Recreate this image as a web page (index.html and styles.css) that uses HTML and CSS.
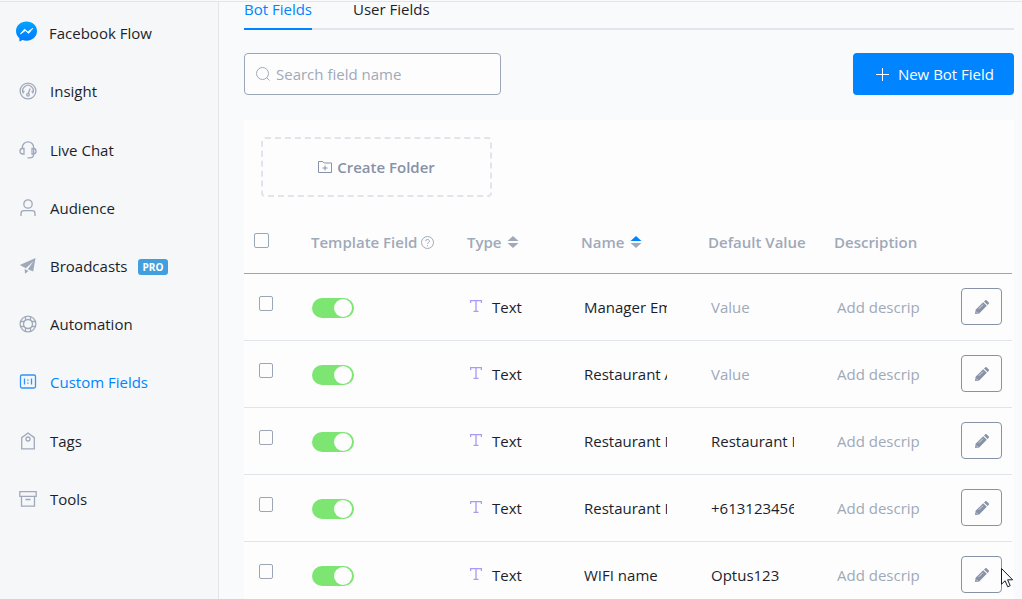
FILE: index.html
```html
<!DOCTYPE html>
<html lang="en">
<head>
<meta charset="utf-8">
<title>Custom Fields</title>
<link rel="stylesheet" href="styles.css">
</head>
<body>
<div class="app">
  <nav class="sidebar" aria-label="Main">
    <a class="nav-item brand" href="#">
      <svg class="brand-icon" viewBox="0 0 21 21"><defs><linearGradient id="msg" x1="0" y1="0" x2="0" y2="1"><stop offset="0" stop-color="#00a5ff"/><stop offset="1" stop-color="#0078ff"/></linearGradient></defs><path d="M10.500 .5C4.800 .5 0 4.600 0 10c0 3 1.300 5.400 3.400 7.200V20.600l3.200-1.500c1.200.4 2.500.6 3.900.6 5.800 0 10.500-4.100 10.500-9.700S16.300.5 10.500.5z" fill="url(#msg)"/><path d="M4.500 12.900 8.500 8.200l3.200 2.700 5-3.500-4 4.900-3.400-2.800z" fill="#fff" stroke="#fff" stroke-width=".9" stroke-linejoin="round"/></svg>
      <span>Facebook Flow</span></a>
    <a class="nav-item" href="#">
      <svg class="icon" viewBox="0 0 18 18"><circle cx="9" cy="9" r="7.900"/><path d="M4.500 11.500A5.300 5.300 0 1 1 13.500 11.500M4.300 9.500h1.200M12.500 9.500h1.200M9.300 11.500l1.800-5"/><circle cx="9" cy="12.700" r="1.300"/></svg>
      <span>Insight</span></a>
    <a class="nav-item" href="#">
      <svg class="icon" viewBox="0 0 18 18"><path d="M3.300 7V6.500a5.700 5.700 0 0 1 11.400 0V13c0 2.500-1.700 3.900-4.200 3.900H8.500M5 7.500v5.500H3.700A2.700 2.700 0 0 1 3.700 7.500zM13 7.500v5.500h1.300a2.700 2.700 0 0 0 0-5.500z"/></svg>
      <span>Live Chat</span></a>
    <a class="nav-item" href="#">
      <svg class="icon" viewBox="0 0 18 18"><circle cx="9" cy="5" r="4.200"/><path d="M2 17v-2.500a2.800 2.800 0 0 1 2.800-2.800h8.400a2.800 2.800 0 0 1 2.800 2.800V17"/></svg>
      <span>Audience</span></a>
    <a class="nav-item" href="#">
      <svg class="icon solid" viewBox="0 0 18 18"><path d="M16.500 1 14.200 14.500 8.800 12.200 14.500 4.300 6.800 11.300.8 8zM5.700 12l3.800 2-3.500 2.800z"/></svg>
      <span>Broadcasts</span><span class="badge">PRO</span></a>
    <a class="nav-item" href="#">
      <svg class="icon" viewBox="0 0 18 18"><circle cx="9" cy="9" r="7.900"/><circle cx="9" cy="9" r="4.500"/><path d="M6.500 1.700v4.200M11.500 1.700v4.200M6.500 12.100v4.200M11.500 12.100v4.200M1.700 6.500h4.200M1.700 11.500h4.200M12.100 6.500h4.200M12.100 11.500h4.200"/></svg>
      <span>Automation</span></a>
    <a class="nav-item active" href="#" aria-current="page">
      <svg class="icon" viewBox="0 0 18 18"><rect x="1.500" y="2" width="15" height="13" rx="1.500"/><path d="M5.500 5.500v6M12.500 5.500v6M8.900 6.500v1.300M8.900 9.500v1.300"/></svg>
      <span>Custom Fields</span></a>
    <a class="nav-item" href="#">
      <svg class="icon" viewBox="0 0 18 18"><path d="M9 1l6.300 4.700v11.200H2.700V5.700z"/><circle cx="9" cy="7" r="2"/></svg>
      <span>Tags</span></a>
    <a class="nav-item" href="#">
      <svg class="icon" viewBox="0 0 18 18"><path d="M.8 1.700h16.400v4.600H.8zM2.500 6.300h13v9.800h-13zM6.500 9.500h5"/></svg>
      <span>Tools</span></a>
  </nav>

  <main class="main">
    <div class="tabs">
      <a class="tab selected" href="#">Bot Fields</a>
      <a class="tab" href="#">User Fields</a>
    </div>
    <div class="toolbar">
      <label class="search">
        <svg class="search-icon" viewBox="0 0 14 14"><circle cx="6.500" cy="6.500" r="6"/><path d="m10.500 10.500 3 3"/></svg>
        <input type="text" placeholder="Search field name" aria-label="Search field name">
      </label>
      <button class="primary" type="button"><svg class="plus" viewBox="0 0 13 13"><path d="M6.500 0v13M0 6.500h13"/></svg>New Bot Field</button>
    </div>

    <section class="card">
      <button class="folder" type="button"><svg class="folder-icon" viewBox="0 0 14 12"><path d="M.5 11.500V.5h4.300l1.400 1.500h7.300v9.500zM7 4.500v5M4.500 7h5"/></svg>Create Folder</button>
      <table class="fields">
        <colgroup><col class="c-check"><col class="c-template"><col class="c-type"><col class="c-name"><col class="c-value"><col class="c-desc"><col></colgroup>
        <thead>
          <tr>
            <th><input class="check all" type="checkbox" aria-label="Select all"></th>
            <th><span class="head">Template Field<svg class="help" viewBox="0 0 13 13"><circle cx="6.500" cy="6.500" r="6"/><path d="M4.700 5.200a1.800 1.800 0 1 1 2.600 1.600c-.6.300-.8.600-.8 1.200M6.500 9.200v1"/></svg></span></th>
            <th><span class="head">Type<svg class="sort" viewBox="0 0 12 12"><path d="M6 0l5.500 5H.5z"/><path d="M6 12 .5 7h11z"/></svg></span></th>
            <th><span class="head">Name<svg class="sort asc" viewBox="0 0 12 12"><path d="M6 0l5.500 5H.5z"/><path d="M6 12 .5 7h11z"/></svg></span></th>
            <th>Default Value</th>
            <th>Description</th>
            <th></th>
          </tr>
        </thead>
        <tbody id="rows"></tbody>
      </table>
    </section>
  </main>
  <svg class="pointer" viewBox="0 0 12 20"><path d="M.5.5v15.700l3.600-3.400 2.600 6 2.500-1.100-2.600-5.900h5z"/></svg>
</div>
<script src="fields.js"></script>
</body>
</html>
```
FILE: fields.js
```js
const fields = [
  { name: "Manager Email", value: "" },
  { name: "Restaurant Address", value: "" },
  { name: "Restaurant Name", value: "Restaurant Name" },
  { name: "Restaurant Phone", value: "+61312345678" },
  { name: "WIFI name", value: "Optus123" }
];

document.getElementById("rows").innerHTML = fields.map(({ name, value }) => `
  <tr>
    <td class="top"><input class="check" type="checkbox" aria-label="Select ${name}"></td>
    <td><input class="toggle" type="checkbox" role="switch" checked aria-label="Template field"></td>
    <td><span class="type"><svg class="type-icon" viewBox="0 0 12 12"><path d="M.6 3V.6h10.800V3M6 .6v10.800M3.500 11.400h5"/></svg>Text</span></td>
    <td><input class="cell" type="text" value="${name}" aria-label="Name"></td>
    <td><input class="cell" type="text" value="${value}" placeholder="Value" aria-label="Default value"></td>
    <td><input class="cell" type="text" placeholder="Add description" aria-label="Description"></td>
    <td><button class="edit" type="button" aria-label="Edit"><svg class="pencil" viewBox="0 0 14 14"><path d="M0 14l.6-4.200L8.200 2.200l3.600 3.600L4.200 13.400zM9 1.400 10.100.4a1.200 1.200 0 0 1 1.700 0l1.800 1.800a1.200 1.200 0 0 1 0 1.700L12.600 5z"/><path class="shine" d="M3.800 8.800 8 4.600M1.200 11.600l1.200 1.200"/></svg></button></td>
  </tr>`).join("");
```
FILE: styles.css
```css
* { box-sizing: border-box; }

body {
  margin: 0;
  font: 15px/20px "Open Sans", sans-serif;
  color: #1c1f2b;
  background: #f9fafc;
}

input, button { font: inherit; color: inherit; }
a { color: inherit; text-decoration: none; }
svg { flex: none; fill: none; }

.app {
  position: relative;
  display: flex;
  height: 100vh;
  overflow: hidden;
  padding-top: 1px;
}
.app::before {
  content: "";
  position: absolute;
  top: 1px;
  left: 0;
  right: 0;
  height: 1px;
  background: #e1e4e9;
}

.sidebar {
  flex: none;
  display: grid;
  grid-auto-rows: 1fr;
  align-self: stretch;
  align-content: start;
  width: 219px;
  padding: 3px 16px 71px 20px;
  border-right: 1px solid #e1e4e9;
  background: #f5f7f9;
}
.nav-item { display: flex; align-items: center; gap: 12px; }
.nav-item.active { color: #0084ff; }
.brand { margin-left: -4px; }
.brand-icon { width: 21px; height: 21px; margin-bottom: 4px; }
.icon { width: 18px; height: 18px; margin-left: -1px; margin-right: 1px; stroke: #a0a9ba; stroke-width: 1.3; }
.active .icon { stroke: #2f92ff; }
.icon.solid { fill: #a0a9ba; stroke: none; }
.badge {
  margin-top: 3px;
  margin-left: -2px;
  padding: 0 5px;
  border-radius: 3px;
  background: #429fdf;
  color: #fff;
  font-size: 10px;
  font-weight: 700;
  line-height: 16px;
}

.main { flex: 1; min-width: 0; padding: 0 8px 0 25px; }

.tabs {
  display: flex;
  gap: 41px;
  height: 29px;
  box-shadow: inset 0 -2px #e3e5ed;
}
.tab { line-height: 16px; }
.tab.selected { color: #0084ff; border-bottom: 2px solid #0084ff; }

.toolbar {
  display: flex;
  justify-content: space-between;
  padding: 23px 0 25px;
}
.search {
  display: flex;
  align-items: center;
  gap: 6px;
  width: 257px;
  height: 42px;
  padding: 0 11px;
  border: 1px solid #9ba6b7;
  border-radius: 4px;
  background: #fdfdfe;
}
.search-icon { width: 14px; height: 14px; stroke: #a0a9ba; }
.search input { flex: 1; min-width: 0; padding: 0; border: 0; outline: 0; background: none; }
::placeholder { color: #a0a9b8; opacity: 1; }

.primary {
  display: flex;
  align-items: center;
  gap: 9px;
  padding: 0 20px 0 23px;
  border: 0;
  border-radius: 4px;
  background: #0084ff;
  color: #fff;
}
.plus { width: 13px; height: 13px; stroke: #fff; }

.card { padding: 17px 2px 0 0; background: #fdfdfe; }
.folder {
  display: flex;
  align-items: center;
  justify-content: center;
  gap: 5px;
  width: 231px;
  height: 60px;
  margin: 0 0 15px 17px;
  border: 2px dashed #e0e4eb;
  border-radius: 4px;
  background: none;
  color: #8792a6;
  font-weight: 600;
}
.folder-icon { width: 14px; height: 12px; stroke: #8792a6; }

.fields { width: 100%; table-layout: fixed; border-collapse: collapse; }
.c-check { width: 67px; }
.c-template { width: 156px; }
.c-type { width: 114px; }
.c-name { width: 127px; }
.c-value { width: 126px; }
.c-desc { width: 126px; }
.fields th {
  height: 61px;
  padding: 0;
  border-bottom: 1px solid #9ba6b7;
  color: #a0a9b8;
  font-weight: 600;
  text-align: left;
}
.fields td { height: 67px; padding: 0; border-bottom: 1px solid #e0e4eb; }
.fields td.top { vertical-align: top; padding-top: 22px; }
.head { display: flex; align-items: center; gap: 4px; }
.help { width: 13px; height: 13px; stroke: #a0a9b8; }
.sort { width: 12px; height: 12px; margin-left: 2px; fill: #a0a9b8; }
.sort.asc path:first-child { fill: #0084ff; }

.check {
  appearance: none;
  display: block;
  width: 14px;
  height: 15px;
  margin: 0 0 0 15px;
  border: 1px solid #9ba6b7;
  border-radius: 2px;
}
.check.all { width: 15px; margin: 0 0 4px 10px; }

.toggle {
  appearance: none;
  display: block;
  width: 42px;
  height: 20px;
  margin: 2px 0 0 1px;
  padding: 1px 2px;
  border-radius: 10px;
  background: #7de572;
}
.toggle::before {
  content: "";
  display: block;
  width: 18px;
  height: 18px;
  border-radius: 50%;
  background: #fdfdfe;
}
.toggle:checked::before { margin-left: auto; }

.type { display: flex; align-items: center; gap: 10px; padding-left: 3px; }
.type-icon { width: 12px; height: 12px; margin-bottom: 2px; stroke: #a79bf5; stroke-width: 1.3; }

.cell {
  display: block;
  width: 87px;
  margin: 1px 0 0 1px;
  padding: 0 2px;
  border: 0;
  outline: 0;
  background: none;
}

.edit {
  display: flex;
  align-items: center;
  justify-content: center;
  width: 41px;
  height: 37px;
  margin: 0 0 0 1px;
  padding: 0;
  border: 1px solid #8792a6;
  border-radius: 4px;
  background: none;
}
.pencil { width: 14px; height: 14px; fill: #8792a6; }
.shine { stroke: #fdfdfe; stroke-width: 0.7; }

/* Mouse pointer resting over the last edit button */
.pointer {
  position: absolute;
  top: 568px;
  left: 1001px;
  width: 12px;
  height: 20px;
  fill: #fff;
  stroke: #15192b;
}
```
